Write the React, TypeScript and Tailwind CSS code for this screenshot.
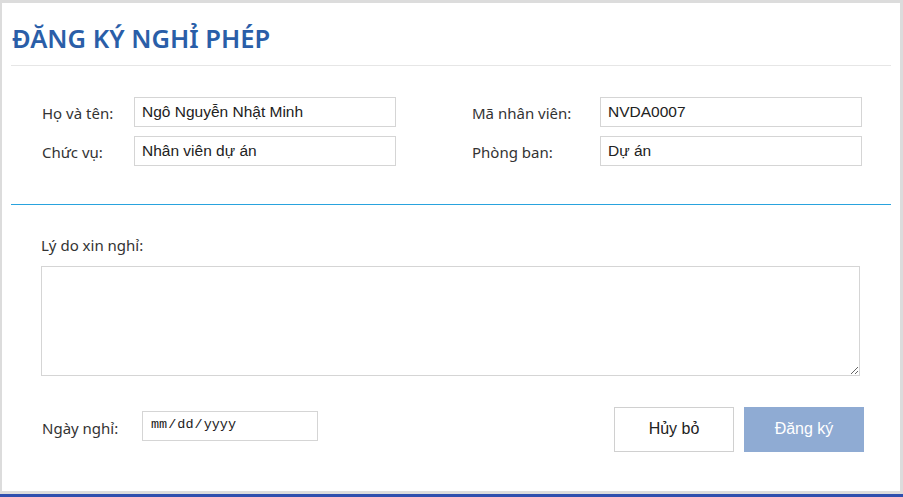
import React from "react"

const labelCls = "text-[15px] text-[#333] font-['Noto_Sans',sans-serif]"
const inputCls =
  "h-[30px] border border-[#d5d5d5] px-[7px] text-[15.5px] text-[#222] font-['Liberation_Sans',Arial,sans-serif] outline-none bg-white"

function Field({ label, value, labelWidth }: { label: string; value: string; labelWidth: string }) {
  return (
    <div className="flex items-center">
      <span className={`${labelCls} ${labelWidth} pt-[3px]`}>{label}</span>
      <input className={`${inputCls} w-[262px]`} defaultValue={value} />
    </div>
  )
}

export default function App() {
  return (
    <div className="w-full h-[497px] bg-[#dcdcdc] flex flex-col overflow-hidden">
      <div className="mt-[3px] ml-[2px] mr-[3px] h-[488px] bg-white flex flex-col">
        <div className="mx-[9px] h-[63px] border-b border-[#e6e6e6] flex items-end pb-[11px] pl-[1px]">
          <h1 className="text-[25.5px] leading-[32px] font-semibold text-[#2a5ea8] font-['Noto_Sans',sans-serif]">
            ĐĂNG KÝ NGHỈ PHÉP
          </h1>
        </div>

        <div className="pt-[31px] pl-[40px] grid grid-cols-[430px_auto] gap-y-[9px]">
          <Field label="Họ và tên:" value="Ngô Nguyễn Nhật Minh" labelWidth="w-[92px]" />
          <Field label="Mã nhân viên:" value="NVDA0007" labelWidth="w-[128px]" />
          <Field label="Chức vụ:" value="Nhân viên dự án" labelWidth="w-[92px]" />
          <Field label="Phòng ban:" value="Dự án" labelWidth="w-[128px]" />
        </div>

        <div className="mx-[9px] mt-[38px] border-t border-[#29a3de]" />

        <div className="pl-[39px] pt-[29px]">
          <div className={labelCls}>Lý do xin nghỉ:</div>
          <textarea className="mt-[9px] block w-[819px] h-[110px] border border-[#d5d5d5] outline-none p-[6px] text-[14px]" />
        </div>

        <div className="mt-[31px] pl-[40px] pr-[36px] flex items-start justify-between">
          <div className="flex items-center mt-[4px]">
            <span className={`${labelCls} w-[100px] pt-[5px]`}>Ngày nghỉ:</span>
            <input
              type="date"
              className="h-[30px] w-[176px] border border-[#d5d5d5] px-[7px] text-[13.5px] text-[#222] font-['Liberation_Mono',monospace] outline-none [&::-webkit-calendar-picker-indicator]:hidden"
            />
          </div>
          <div className="flex gap-[10px] font-['Liberation_Sans',Arial,sans-serif] text-[16px]">
            <button className="w-[120px] h-[45px] border border-[#d0d0d0] bg-white text-[#222]">Hủy bỏ</button>
            <button className="w-[120px] h-[45px] bg-[#8fabd3] text-white">Đăng ký</button>
          </div>
        </div>
      </div>
      <div className="mt-[3px] h-[3px] bg-[#2f4fae]" />
    </div>
  )
}
